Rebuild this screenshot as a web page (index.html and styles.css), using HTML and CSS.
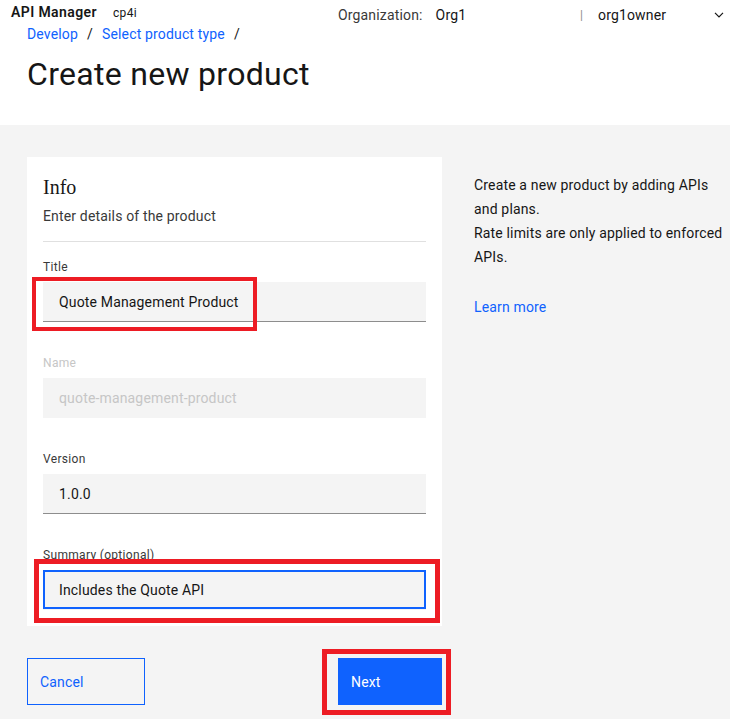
FILE: index.html
```html
<!DOCTYPE html>
<html lang="en">
<head>
<meta charset="utf-8">
<title>Create new product</title>
<link rel="stylesheet" href="styles.css">
</head>
<body>
<div class="page">
  <header class="top">
    <div class="topbar">
      <div class="brand"><span class="brand-name">API Manager</span><span class="brand-sub">cp4i</span></div>
      <div class="org"><span class="org-label">Organization:</span><span class="org-value">Org1</span></div>
      <div class="sep">|</div>
      <div class="user"><span>org1owner</span>
        <svg class="chev" width="10" height="6" viewBox="0 0 10 6"><polyline points="1,0.8 5,4.8 9,0.8" fill="none" stroke="#161616" stroke-width="1.2"/></svg>
      </div>
    </div>
    <nav class="crumbs"><a class="crumb">Develop</a><span class="slash">/</span><a class="crumb">Select product type</a><span class="slash">/</span></nav>
    <h1 class="title">Create new product</h1>
  </header>
  <main class="content">
    <div class="left">
      <section class="card">
        <h2 class="card-title">Info</h2>
        <p class="card-sub">Enter details of the product</p>
        <hr class="divider">
        <div class="field">
          <label class="label">Title</label>
          <div class="input">Quote Management Product</div>
        </div>
        <div class="field disabled">
          <label class="label">Name</label>
          <div class="input">quote-management-product</div>
        </div>
        <div class="field">
          <label class="label">Version</label>
          <div class="input">1.0.0</div>
        </div>
        <div class="field">
          <label class="label">Summary (optional)</label>
          <div class="input focus">Includes the Quote API</div>
        </div>
      </section>
      <div class="actions">
        <button class="btn btn-secondary">Cancel</button>
        <button class="btn btn-primary">Next</button>
      </div>
    </div>
    <aside class="help">
      <p class="help-text">Create a new product by adding APIs and plans.<br>Rate limits are only applied to enforced APIs.</p>
      <a class="help-link">Learn more</a>
    </aside>
  </main>
  <div class="mark mark-title"></div>
  <div class="mark mark-summary"></div>
  <div class="mark mark-next"></div>
</div>
</body>
</html>
```

FILE: styles.css
```css
* { box-sizing: border-box; }
html, body { margin: 0; padding: 0; }
body {
  font-family: Roboto, "Noto Sans", "Liberation Sans", sans-serif;
  color: #161616;
  background: #f4f4f4;
  width: 730px;
  height: 719px;
  overflow: hidden;
  letter-spacing: 0.16px;
}
.page { position: relative; width: 730px; height: 719px; }

.top { background: #ffffff; padding-bottom: 31px; }
.topbar {
  display: flex;
  align-items: flex-start;
  height: 24px;
  padding-top: 3px;
  font-size: 14px;
  line-height: 18px;
}
.brand { width: 338px; padding-left: 11px; display: flex; align-items: baseline; }
.brand-name { display: inline-block; width: 102px; font-size: 14px; font-weight: 600; letter-spacing: 0.4px; }
.brand-sub { font-size: 12px; color: #161616; letter-spacing: 0.32px; }
.org { width: 242px; padding-top: 3px; color: #393939; }
.org-label { margin-right: 13px; }
.org-value { color: #161616; }
.sep { width: 18px; padding-top: 3px; color: #8d8d8d; font-size: 12px; }
.user { flex: 1; display: flex; justify-content: space-between; padding-top: 3px; padding-right: 6px; }
.chev { margin-top: 6px; }

.crumbs {
  padding-left: 27px;
  font-size: 14px;
  line-height: 20px;
  display: flex;
}
.crumb { color: #0f62fe; text-decoration: none; }
.slash { margin: 0 9px; color: #161616; }
.title {
  margin: 10px 0 0 27px;
  font-size: 32px;
  line-height: 40px;
  font-weight: 400;
  letter-spacing: 0.3px;
}

.content {
  display: flex;
  gap: 32px;
  padding: 32px 0 0 27px;
}
.left { width: 415px; }
.card {
  background: #ffffff;
  padding: 16px;
}
.card-title {
  margin: 0;
  font-family: "Liberation Serif", "DejaVu Serif", serif;
  font-size: 20px;
  line-height: 28px;
  font-weight: 400;
  letter-spacing: 0;
}
.card-sub {
  margin: 5px 0 0;
  font-size: 14px;
  line-height: 20px;
  color: #393939;
}
.divider {
  margin: 15px 0 17px;
  border: 0;
  border-top: 1px solid #e0e0e0;
  height: 0;
}
.field { margin-bottom: 33px; }
.field:last-child { margin-bottom: 0; }
.label {
  display: block;
  font-size: 12px;
  line-height: 16px;
  color: #393939;
  margin-bottom: 7px;
  letter-spacing: 0.32px;
}
.input {
  height: 40px;
  background: #f4f4f4;
  border-bottom: 1px solid #8d8d8d;
  padding: 1px 16px 0;
  font-size: 14px;
  line-height: 39px;
  color: #161616;
}
.disabled .label { color: #c6c6c6; }
.disabled .input { color: #c6c6c6; border-bottom-color: transparent; }
.input.focus { box-shadow: inset 0 0 0 2px #0f62fe; border-bottom-color: transparent; }

.actions {
  display: flex;
  justify-content: space-between;
  margin-top: 32px;
}
.btn {
  height: 47px;
  font-family: inherit;
  font-size: 14px;
  letter-spacing: 0.16px;
  text-align: left;
  cursor: pointer;
  border-radius: 0;
  padding-top: 1px;
}
.btn-secondary {
  width: 118px;
  background: transparent;
  border: 1px solid #0f62fe;
  color: #0f62fe;
  padding-left: 12px;
}
.btn-primary {
  width: 104px;
  background: #0f62fe;
  border: 1px solid #0f62fe;
  color: #ffffff;
  padding-left: 12px;
}

.help { padding-top: 16px; width: 256px; }
.help-text {
  margin: 0;
  font-size: 14px;
  line-height: 24px;
  color: #161616;
}
.help-link {
  display: block;
  margin-top: 26px;
  font-size: 14px;
  line-height: 24px;
  color: #0f62fe;
}

.mark { position: absolute; border: 5px solid #ed1c24; pointer-events: none; }
.mark-title { left: 32px; top: 277px; width: 225px; height: 54px; border-width: 4px; }
.mark-summary { left: 34px; top: 559px; width: 406px; height: 64px; }
.mark-next { left: 322px; top: 649px; width: 129px; height: 66px; }
```
